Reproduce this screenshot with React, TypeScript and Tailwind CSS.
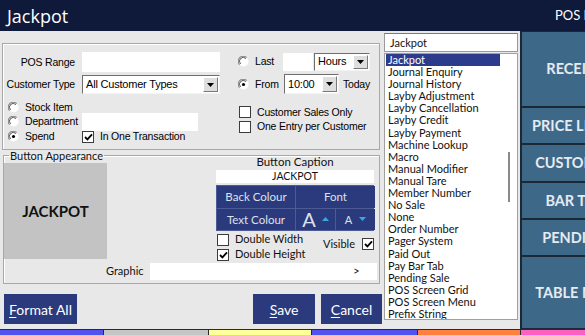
import React from 'react';

const label = "font-['Liberation_Sans',Arial,sans-serif] text-[10.5px] tracking-[-0.2px] text-black leading-none";
const ui = "font-['Lato',sans-serif]";

function Radio({ on = false }: { on?: boolean }) {
  return (
    <svg width="11" height="11" viewBox="0 0 12 12" className="shrink-0">
      <circle cx="6" cy="6" r="5.5" fill="#ffffff" />
      <path d="M1.8 9.5 A5 5 0 0 1 9.5 1.8" stroke="#8a8a8a" strokeWidth="1.2" fill="none" />
      <path d="M2.8 8.6 A3.9 3.9 0 0 1 8.6 2.8" stroke="#404040" strokeWidth="1" fill="none" />
      {on && <circle cx="6" cy="6" r="1.7" fill="#000" />}
    </svg>
  );
}

function Check({ on = false }: { on?: boolean }) {
  return (
    <div className="w-[12px] h-[12px] shrink-0 bg-white border border-[#3c3c3c] flex items-center justify-center">
      {on && (
        <svg width="9" height="8" viewBox="0 0 9 8">
          <path d="M1 4 L3.4 6.4 L8 1.4" stroke="#000" strokeWidth="1.8" fill="none" />
        </svg>
      )}
    </div>
  );
}

function Arrow() {
  return (
    <svg width="7" height="4" viewBox="0 0 7 4">
      <path d="M0 0 H7 L3.5 4 Z" fill="#000" />
    </svg>
  );
}

function Select({ text, className }: { text: string; className: string }) {
  return (
    <div className={`flex items-center bg-white border-t border-l border-t-[#6e6e6e] border-l-[#6e6e6e] border-b border-r border-b-[#f4f4f4] border-r-[#f4f4f4] ${className}`}>
      <span className={`${label} flex-1 pl-[3px] text-[11px]`}>{text}</span>
      <div className="w-[15px] self-stretch my-[1px] mr-[1px] bg-[#dedede] border border-t-white border-l-white border-b-[#7a7a7a] border-r-[#7a7a7a] flex items-center justify-center">
        <Arrow />
      </div>
    </div>
  );
}

const items = [
  'Jackpot', 'Journal Enquiry', 'Journal History', 'Layby Adjustment', 'Layby Cancellation',
  'Layby Credit', 'Layby Payment', 'Machine Lookup', 'Macro', 'Manual Modifier', 'Manual Tare',
  'Member Number', 'No Sale', 'None', 'Order Number', 'Pager System', 'Paid Out', 'Pay Bar Tab',
  'Pending Sale', 'POS Screen Grid', 'POS Screen Menu', 'Prefix String',
];

const sideButtons = [
  { t: 'RECEIPT', h: 'h-[74px]' },
  { t: 'PRICE LEVEL', h: 'h-[35px]' },
  { t: 'CUSTOMER', h: 'h-[36px]' },
  { t: 'BAR TAB', h: 'h-[35px]' },
  { t: 'PENDING', h: 'h-[35px]' },
  { t: 'TABLE MAP', h: 'h-[71px]' },
];

export default function App() {
  return (
    <div className="w-[585px] h-[335px] overflow-hidden flex flex-col bg-[#e8e8e8]">
      {/* title bar */}
      <div className="h-[31px] shrink-0 bg-[#0f1a3b] flex items-center justify-between pl-[7px] overflow-hidden">
        <span className="font-['Open_Sans',sans-serif] text-[18px] leading-none text-white">Jackpot</span>
        <span className={`${ui} text-[13px] text-white whitespace-nowrap w-[30px] overflow-hidden`}>POS Mode</span>
      </div>

      <div className="h-[298px] shrink-0 flex">
        {/* dialog */}
        <div className="w-[520px] shrink-0 bg-[#e8e8e8] flex">
          <div className="w-[383px] shrink-0 flex flex-col">
            {/* group 1 */}
            <div className="mt-[12px] ml-[2px] w-[378px] h-[107px] border border-[#a8a8a8] shadow-[inset_1px_1px_0_#fff] flex">
              <div className="w-[219px] pt-[8px] flex flex-col">
                <div className="h-[20px] flex items-center">
                  <span className={`${label} w-[72px] text-right`}>POS Range</span>
                  <div className="ml-[7px] w-[138px] h-[20px] bg-white" />
                </div>
                <div className="mt-[3px] h-[19px] flex items-center">
                  <span className={`${label} w-[72px] text-right whitespace-nowrap`}>Customer Type</span>
                  <Select text="All Customer Types" className="ml-[7px] w-[138px] h-[19px]" />
                </div>
                <div className="mt-[6px] h-[14px] flex items-center pl-[5px] gap-[6px]">
                  <Radio />
                  <span className={label}>Stock Item</span>
                </div>
                <div className="h-[15px] flex items-center">
                  <div className="w-[79px] flex items-center pl-[5px] gap-[6px]">
                    <Radio />
                    <span className={label}>Department</span>
                  </div>
                  <div className="w-[116px] h-[18px] bg-white" />
                </div>
                <div className="h-[15px] flex items-center">
                  <div className="w-[79px] flex items-center pl-[5px] gap-[6px]">
                    <Radio on />
                    <span className={label}>Spend</span>
                  </div>
                  <Check on />
                  <span className={`${label} ml-[6px]`}>In One Transaction</span>
                </div>
              </div>

              <div className="ml-[15px] pt-[8px] flex flex-col">
                <div className="h-[19px] flex items-center">
                  <div className="pl-[1px] w-[46px] flex items-center gap-[6px]">
                    <Radio />
                    <span className={label}>Last</span>
                  </div>
                  <div className="w-[30px] h-[18px] bg-white" />
                  <Select text="Hours" className="ml-[1px] w-[56px] h-[18px]" />
                </div>
                <div className="mt-[3px] h-[20px] flex items-center">
                  <div className="pl-[1px] w-[47px] flex items-center gap-[6px]">
                    <Radio on />
                    <span className={label}>From</span>
                  </div>
                  <Select text="10:00" className="w-[55px] h-[20px]" />
                  <span className={`${label} ml-[4px]`}>Today</span>
                </div>
                <div className="mt-[11px] h-[14px] flex items-center pl-[2px] gap-[6px]">
                  <Check />
                  <span className={label}>Customer Sales Only</span>
                </div>
                <div className="h-[15px] flex items-center pl-[2px] gap-[6px]">
                  <Check />
                  <span className={label}>One Entry per Customer</span>
                </div>
              </div>
            </div>

            {/* group 2 */}
            <fieldset className="ml-[3px] w-[377px] h-[134px] border border-[#a8a8a8] shadow-[inset_1px_1px_0_#fff] flex flex-col">
              <legend className={`${ui} ml-[5px] px-[1px] text-[11px] leading-[11px] text-[#111]`}>Button Appearance</legend>
              <div className="flex h-[101px]">
                <div className="mt-[2px] w-[103px] h-[96px] bg-[#c3c3c3] flex items-center justify-center">
                  <span className={`${ui} text-[15px] font-bold text-[#111]`}>JACKPOT</span>
                </div>
                <div className="ml-[109px] -mt-[5px] w-[158px] flex flex-col">
                  <div className={`${ui} h-[12px] text-[11.5px] leading-[12px] text-center text-[#111]`}>Button Caption</div>
                  <div className={`${ui} mt-[2px] h-[13px] bg-white text-[10.5px] leading-[13px] text-center text-[#111]`}>JACKPOT</div>
                  <div className="mt-[2px] h-[46px] grid grid-cols-[78px_39px_39px] grid-rows-2 gap-px p-px bg-[#4d5b94]">
                    <div className={`${ui} bg-[#2b3a7c] text-[#dde1ec] text-[11.5px] flex items-center justify-center`}>Back Colour</div>
                    <div className={`${ui} col-span-2 bg-[#2b3a7c] text-[#dde1ec] text-[11.5px] flex items-center justify-center`}>Font</div>
                    <div className={`${ui} bg-[#2b3a7c] text-[#dde1ec] text-[11.5px] flex items-center justify-center`}>Text Colour</div>
                    <div className="bg-[#2b3a7c] flex items-center justify-center gap-[6px]">
                      <span className={`${ui} text-[#dde1ec] text-[20px] leading-none`}>A</span>
                      <svg width="7" height="4" viewBox="0 0 7 4"><path d="M0 4 H7 L3.5 0 Z" fill="#3aa8de" /></svg>
                    </div>
                    <div className="bg-[#2b3a7c] flex items-center justify-center gap-[7px]">
                      <span className={`${ui} text-[#dde1ec] text-[11px] leading-none`}>A</span>
                      <svg width="7" height="4" viewBox="0 0 7 4"><path d="M0 0 H7 L3.5 4 Z" fill="#3aa8de" /></svg>
                    </div>
                  </div>
                  <div className="flex">
                    <div className="flex flex-col pl-[1px]">
                      <div className="h-[15px] flex items-center gap-[6px] mt-[1px]">
                        <Check />
                        <span className={`${ui} text-[11px] text-[#111]`}>Double Width</span>
                      </div>
                      <div className="h-[15px] flex items-center gap-[6px]">
                        <Check on />
                        <span className={`${ui} text-[11px] text-[#111]`}>Double Height</span>
                      </div>
                    </div>
                    <div className="ml-auto mt-[7px] h-[12px] flex items-center gap-[7px]">
                      <span className={`${ui} text-[11px] text-[#111]`}>Visible</span>
                      <Check on />
                    </div>
                  </div>
                </div>
              </div>
              <div className="mt-[1px] h-[17px] flex items-center pl-[102px]">
                <span className={`${ui} text-[11px] text-[#111]`}>Graphic</span>
                <div className="ml-[6px] w-[227px] h-[17px] bg-white flex items-center justify-end pr-[17px]">
                  <span className={`${ui} text-[11px] text-[#111]`}>&gt;</span>
                </div>
              </div>
            </fieldset>

            {/* footer */}
            <div className="mt-[10px] flex items-start pl-[4px] pr-[1px]">
              <button className={`${ui} w-[73px] h-[30px] bg-[#2b3a7c] text-white text-[14px]`}>
                <span className="underline underline-offset-2">F</span>ormat All
              </button>
              <div className="flex-1" />
              <button className={`${ui} w-[62px] h-[30px] bg-[#2b3a7c] text-white text-[14px]`}>
                <span className="underline underline-offset-2">S</span>ave
              </button>
              <button className={`${ui} ml-[6px] w-[61px] h-[30px] bg-[#2b3a7c] text-white text-[14px]`}>
                <span className="underline underline-offset-2">C</span>ancel
              </button>
            </div>
          </div>

          {/* function list */}
          <div className="ml-[1px] w-[134px] flex flex-col">
            <div className={`${ui} mt-[2px] h-[19px] bg-white border border-[#9a9a9a] border-t-[#7a7a7a] text-[11px] leading-[17px] pl-[5px] text-[#111]`}>Jackpot</div>
            <div className="mt-[1px] h-[267px] bg-white border border-[#a0a0a0] flex overflow-hidden">
              <div className="flex-1 pl-[1px] flex flex-col">
                {items.map((it, i) => (
                  <div
                    key={it}
                    className={`${ui} h-[12.1px] shrink-0 text-[11px] leading-[12.1px] pl-[2px] whitespace-nowrap ${i === 0 ? 'bg-[#2c3b8c] text-white' : 'text-[#111]'}`}
                  >
                    {it}
                  </div>
                ))}
              </div>
              <div className="w-[17px] shrink-0 pt-[98px]">
                <div className="ml-[8px] w-[2px] h-[50px] bg-[#8a8a8a]" />
              </div>
            </div>
          </div>
        </div>

        <div className="w-[2px] shrink-0 bg-[#1b2836]" />

        {/* side buttons */}
        <div className="flex-1 bg-[#1b2836] pt-[1px] flex flex-col gap-[2px] overflow-hidden">
          {sideButtons.map((b) => (
            <div key={b.t} className={`${b.h} w-[106px] shrink-0 bg-[#3e6888] flex items-center justify-center`}>
              <span className={`${ui} text-[14.5px] font-bold text-[#e4ebf2] whitespace-nowrap`}>{b.t}</span>
            </div>
          ))}
        </div>
      </div>

      <div className="h-[1px] shrink-0 bg-[#2a2a2a]" />
      <div className="h-[5px] shrink-0 flex gap-px bg-[#2a2a2a]">
        <div className="w-[103px] bg-[#5252f0]" />
        <div className="w-[104px] bg-[#c6c6c6]" />
        <div className="w-[102px] bg-[#ffff99]" />
        <div className="w-[105px] bg-[#5252f0]" />
        <div className="w-[102px] bg-[#ff8040]" />
        <div className="flex-1 bg-[#ff5fc0]" />
      </div>
    </div>
  );
}
